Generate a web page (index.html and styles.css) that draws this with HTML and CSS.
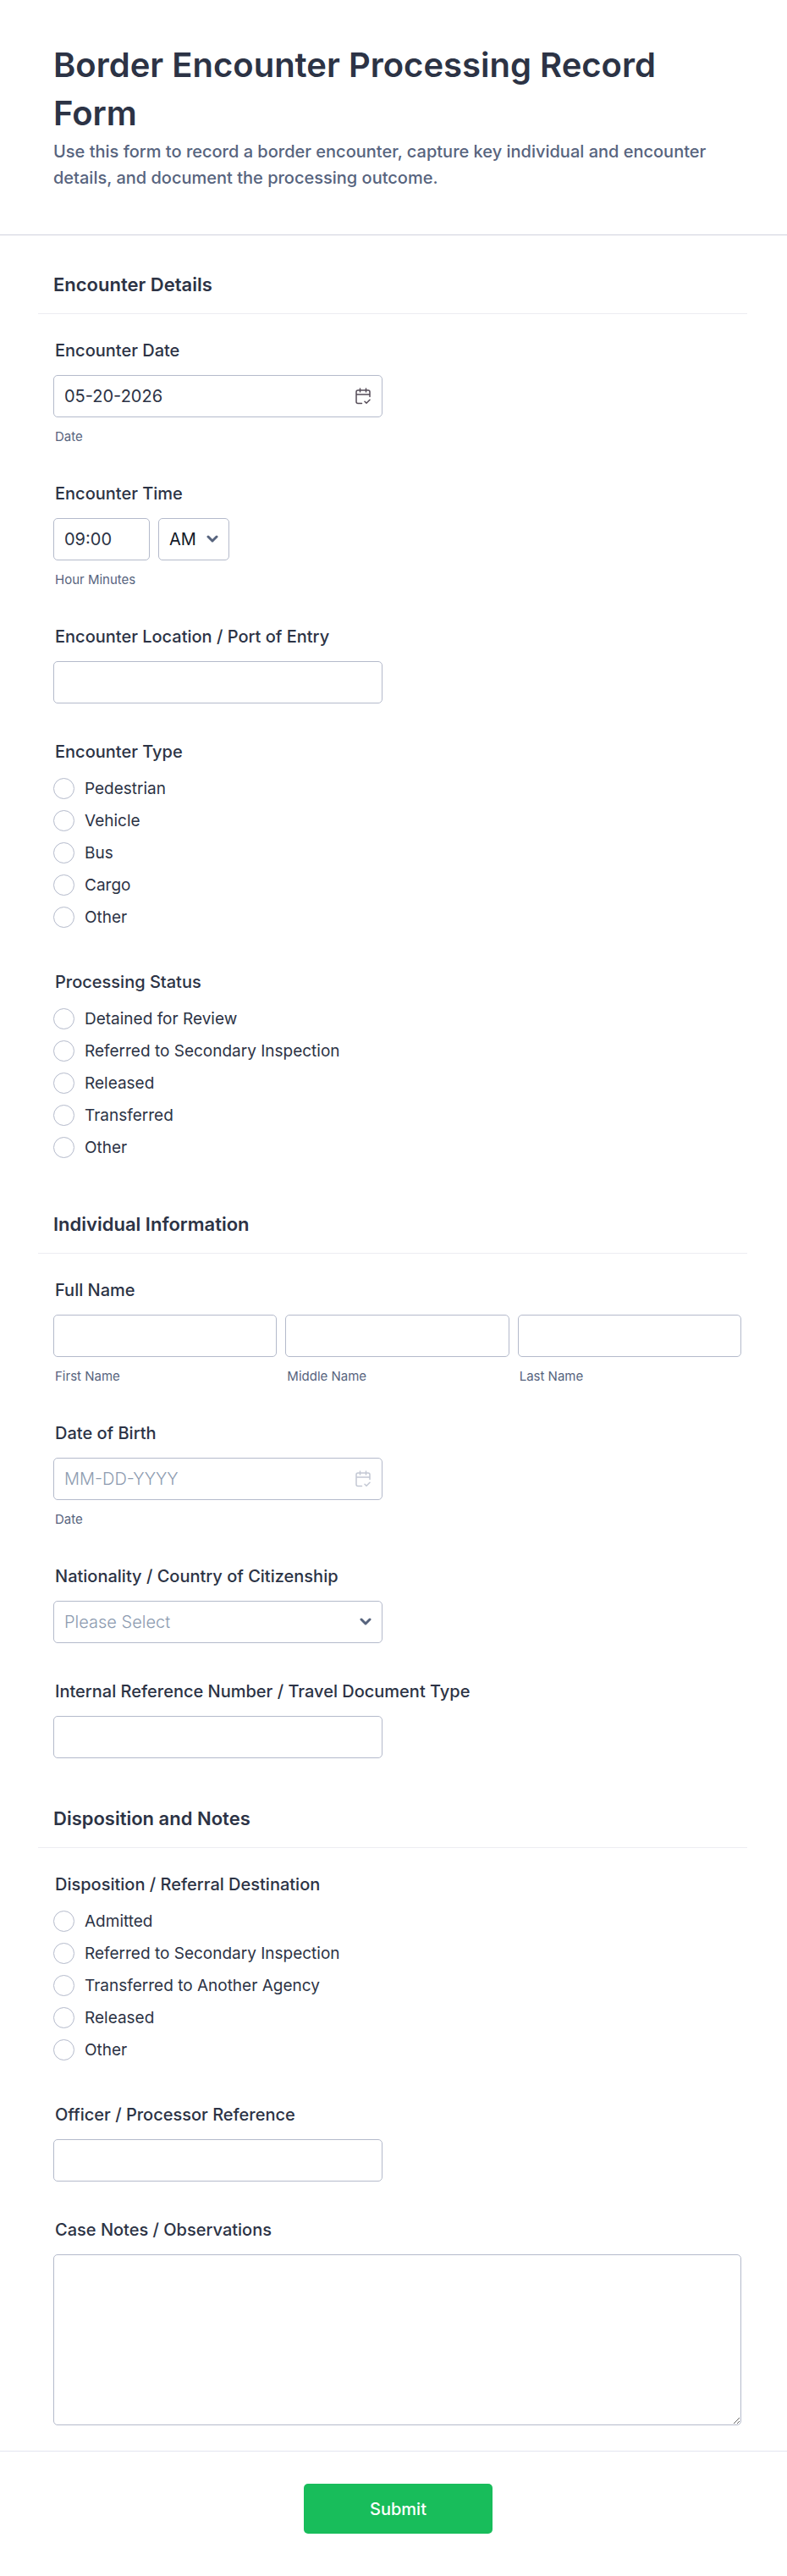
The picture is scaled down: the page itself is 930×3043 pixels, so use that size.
FILE: index.html
```html
<!DOCTYPE html>
<html lang="en">
<head>
    <meta charset="UTF-8">
    <meta name="viewport" content="width=device-width, initial-scale=1.0">
    <title>Border Encounter Processing Record Form</title>
    <link rel="stylesheet" href="styles.css">
</head>
<body>
    <form class="form">
        <header class="form-header">
            <h1>Border Encounter Processing Record Form</h1>
            <p>Use this form to record a border encounter, capture key individual and encounter details, and document the processing outcome.</p>
        </header>

        <!-- Encounter Details -->
        <section class="form-section">
            <h2>Encounter Details</h2>
            <div class="field">
                <label class="field-label" for="encounterDate">Encounter Date</label>
                <div class="date-box">
                    <input class="control" type="text" id="encounterDate" value="05-20-2026" placeholder="MM-DD-YYYY">
                    <button class="date-btn" type="button" aria-label="Choose encounter date">
                        <svg viewBox="0 0 18 20" width="18" height="20" fill="none" stroke="currentColor" stroke-width="1.5" stroke-linecap="round" stroke-linejoin="round">
                            <path d="M7.500 18.500H3a2 2 0 0 1-2-2V5a2 2 0 0 1 2-2h12a2 2 0 0 1 2 2v5.500M1 8h16M5.500 1v4M12.500 1v4M11 16.200l2 2 4-4"/>
                        </svg>
                    </button>
                </div>
                <label class="sub-label" for="encounterDate">Date</label>
            </div>
            <div class="field">
                <label class="field-label" for="encounterTime">Encounter Time</label>
                <div class="time-row">
                    <input class="control time-input" type="text" id="encounterTime" value="09:00">
                    <select class="control period-select" aria-label="AM or PM">
                        <option>AM</option>
                        <option>PM</option>
                    </select>
                </div>
                <label class="sub-label" for="encounterTime">Hour Minutes</label>
            </div>
            <div class="field">
                <label class="field-label" for="location">Encounter Location / Port of Entry</label>
                <input class="control" type="text" id="location">
            </div>
            <fieldset class="field">
                <legend class="field-label">Encounter Type</legend>
                <div class="options">
                    <label class="option"><input type="radio" name="type">Pedestrian</label>
                    <label class="option"><input type="radio" name="type">Vehicle</label>
                    <label class="option"><input type="radio" name="type">Bus</label>
                    <label class="option"><input type="radio" name="type">Cargo</label>
                    <label class="option"><input type="radio" name="type">Other</label>
                </div>
            </fieldset>
            <fieldset class="field">
                <legend class="field-label">Processing Status</legend>
                <div class="options">
                    <label class="option"><input type="radio" name="status">Detained for Review</label>
                    <label class="option"><input type="radio" name="status">Referred to Secondary Inspection</label>
                    <label class="option"><input type="radio" name="status">Released</label>
                    <label class="option"><input type="radio" name="status">Transferred</label>
                    <label class="option"><input type="radio" name="status">Other</label>
                </div>
            </fieldset>
        </section>

        <!-- Individual Information -->
        <section class="form-section">
            <h2>Individual Information</h2>
            <fieldset class="field">
                <legend class="field-label">Full Name</legend>
                <div class="name-row">
                    <div>
                        <input class="control" type="text" id="firstName">
                        <label class="sub-label" for="firstName">First Name</label>
                    </div>
                    <div>
                        <input class="control" type="text" id="middleName">
                        <label class="sub-label" for="middleName">Middle Name</label>
                    </div>
                    <div>
                        <input class="control" type="text" id="lastName">
                        <label class="sub-label" for="lastName">Last Name</label>
                    </div>
                </div>
            </fieldset>
            <div class="field">
                <label class="field-label" for="birthDate">Date of Birth</label>
                <div class="date-box">
                    <input class="control" type="text" id="birthDate" placeholder="MM-DD-YYYY">
                    <button class="date-btn date-btn-empty" type="button" aria-label="Choose date of birth">
                        <svg viewBox="0 0 18 20" width="18" height="20" fill="none" stroke="currentColor" stroke-width="1.5" stroke-linecap="round" stroke-linejoin="round">
                            <path d="M7.500 18.500H3a2 2 0 0 1-2-2V5a2 2 0 0 1 2-2h12a2 2 0 0 1 2 2v5.500M1 8h16M5.500 1v4M12.500 1v4M11 16.200l2 2 4-4"/>
                        </svg>
                    </button>
                </div>
                <label class="sub-label" for="birthDate">Date</label>
            </div>
            <div class="field">
                <label class="field-label" for="nationality">Nationality / Country of Citizenship</label>
                <select class="control empty-select" id="nationality">
                    <option>Please Select</option>
                </select>
            </div>
            <div class="field">
                <label class="field-label" for="reference">Internal Reference Number / Travel Document Type</label>
                <input class="control" type="text" id="reference">
            </div>
        </section>

        <!-- Disposition and Notes -->
        <section class="form-section">
            <h2>Disposition and Notes</h2>
            <fieldset class="field">
                <legend class="field-label">Disposition / Referral Destination</legend>
                <div class="options">
                    <label class="option"><input type="radio" name="disposition">Admitted</label>
                    <label class="option"><input type="radio" name="disposition">Referred to Secondary Inspection</label>
                    <label class="option"><input type="radio" name="disposition">Transferred to Another Agency</label>
                    <label class="option"><input type="radio" name="disposition">Released</label>
                    <label class="option"><input type="radio" name="disposition">Other</label>
                </div>
            </fieldset>
            <div class="field">
                <label class="field-label" for="officer">Officer / Processor Reference</label>
                <input class="control" type="text" id="officer">
            </div>
            <div class="field notes-field">
                <label class="field-label" for="notes">Case Notes / Observations</label>
                <textarea class="control" id="notes"></textarea>
            </div>
        </section>

        <footer class="form-footer">
            <button class="submit-btn" type="submit">Submit</button>
        </footer>
    </form>
</body>
</html>
```
FILE: styles.css
```css
* {
    box-sizing: border-box;
}
body {
    margin: 0;
    background: #fff;
    color: #2c3345;
    font-family: Inter, "Liberation Sans", sans-serif;
}
.form-header {
    padding: 48px 63px 51px;
    border-bottom: 1px solid #d0d2dd;
}
.form-header h1 {
    margin: 0;
    font-size: 40px;
    font-weight: 600;
    line-height: 57px;
}
.form-header p {
    margin: 2px 0 0;
    color: #57647e;
    font-size: 20px;
    font-weight: 500;
    line-height: 31px;
}
.form-section {
    padding: 43px 54px 0 63px;
}
.form-section + .form-section {
    padding-top: 11px;
}
.form-section h2 {
    margin: 0 -7px 31px -18px;
    padding: 0 18px 19px;
    border-bottom: 1px solid #ededf2;
    font-size: 22px;
    font-weight: 600;
    line-height: 30px;
}
.field {
    margin: 0 0 45px;
    padding: 0;
    border: 0;
}
.field-label {
    display: block;
    margin-bottom: 17px;
    padding: 0 2px;
    font-size: 20px;
    font-weight: 500;
    line-height: 24px;
}
.sub-label {
    display: block;
    margin-top: 13px;
    padding: 0 2px;
    color: #57647e;
    font-size: 15px;
    line-height: 20px;
}

/* Inputs */
.control {
    display: block;
    width: 100%;
    max-width: 389px;
    height: 50px;
    padding: 0 12px;
    border: 1px solid #b4bacb;
    border-radius: 5px;
    background-color: #fff;
    color: #2c3345;
    font-family: inherit;
    font-size: 20px;
}
.control::placeholder {
    color: #8d9bb0;
    font-weight: 300;
}
select.control {
    appearance: none;
    background-image: url("data:image/svg+xml,%3Csvg xmlns='http://www.w3.org/2000/svg' width='14' height='10' viewBox='0 0 14 10' fill='none' stroke='%2357647e' stroke-width='3' stroke-linecap='round' stroke-linejoin='round'%3E%3Cpath d='M2 2l5 5 5-5'/%3E%3C/svg%3E");
    background-repeat: no-repeat;
    background-position: right 12px center;
}
.empty-select {
    color: #8d9bb0;
    font-weight: 300;
}
.date-box {
    position: relative;
    max-width: 389px;
}
.date-btn {
    position: absolute;
    top: 0;
    right: 14px;
    display: flex;
    align-items: center;
    height: 50px;
    padding: 0;
    border: 0;
    background: none;
    color: #544b57;
}
.date-btn-empty {
    color: #c3c8d4;
}
.time-row {
    display: flex;
    gap: 10px;
}
.time-input {
    width: 114px;
}
select.period-select {
    width: 84px;
    color: #111827;
}
.name-row {
    display: grid;
    grid-template-columns: repeat(3, 1fr);
    gap: 10px;
}
textarea.control {
    max-width: none;
    height: 202px;
    padding: 12px;
    resize: vertical;
}
.notes-field {
    margin-bottom: 30px;
}

/* Radio lists */
.options {
    display: flex;
    flex-direction: column;
    align-items: flex-start;
    gap: 13px;
    padding: 2px 0 7px;
}
.option {
    display: flex;
    align-items: center;
    gap: 12px;
    font-size: 19px;
    line-height: 25px;
}
.option input {
    appearance: none;
    width: 25px;
    height: 25px;
    margin: 0;
    border: 1px solid #b4bacb;
    border-radius: 50%;
    background: #fff;
}
.option input:checked {
    border: 8px solid #18bd5b;
}

.form-footer {
    display: flex;
    justify-content: center;
    padding: 38px 43px 50px 54px;
    border-top: 1px solid #e3e5f0;
}
.submit-btn {
    min-width: 223px;
    height: 59px;
    border: 0;
    border-radius: 5px;
    background: #18bd5b;
    color: #fff;
    font-family: inherit;
    font-size: 20px;
    font-weight: 500;
}
```
